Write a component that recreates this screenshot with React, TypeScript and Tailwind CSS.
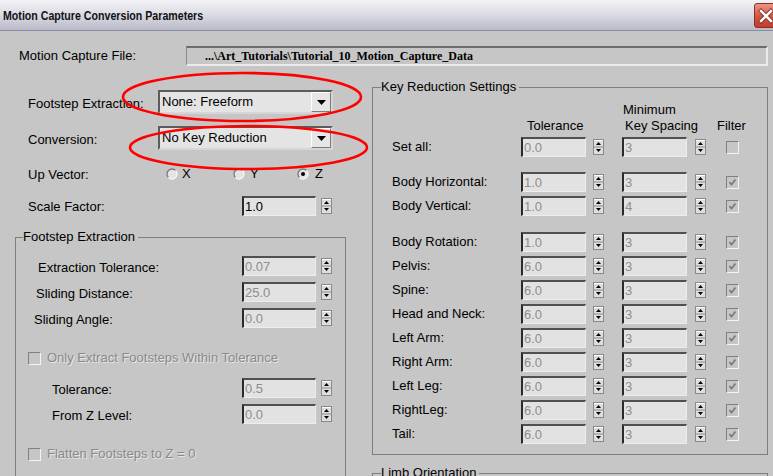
import React from 'react';

const Spinner = () => (
  <svg width="11" height="16" viewBox="0 0 11 16" className="shrink-0 block">
    <rect x="0.5" y="0.5" width="10" height="15" fill="#dedede" stroke="#8a8a8a" />
    <line x1="1" y1="1.5" x2="10" y2="1.5" stroke="#ffffff" />
    <line x1="1" y1="8" x2="10" y2="8" stroke="#8a8a8a" />
    <path d="M5.5 3 L8 6 L3 6 Z" fill="#000" />
    <path d="M3 10 L8 10 L5.5 13 Z" fill="#000" />
  </svg>
);

const Field = ({ value, w = 'w-[74px]', dim = true }: { value: string; w?: string; dim?: boolean }) => (
  <div
    className={`${w} h-[20px] shrink-0 bg-[#e2e2e2] border-t-2 border-l-2 border-t-[#505050] border-l-[#2a2a2a] border-r border-b border-r-[#ededed] border-b-[#ededed] flex items-center pl-[1px] ${
      dim ? 'text-[#8e8e8e]' : 'text-black'
    }`}
  >
    {value}
  </div>
);

const CheckBox = ({ checked }: { checked: boolean }) => (
  <div className="w-[13px] h-[13px] shrink-0 border-t border-l border-t-[#808080] border-l-[#808080] border-b border-r border-b-[#f4f4f4] border-r-[#f4f4f4] bg-[#c6c6c6] flex items-center justify-center">
    {checked && (
      <svg width="9" height="9" viewBox="0 0 9 9">
        <path d="M1.5 4 L3.5 6.5 L7.5 1.5" stroke="#7c7c7c" strokeWidth="1.8" fill="none" />
      </svg>
    )}
  </div>
);

const Radio = ({ checked }: { checked?: boolean }) => (
  <svg width="12" height="12" viewBox="0 0 12 12" className="shrink-0 block">
    <circle cx="6" cy="6" r="5" fill="#e4e4e4" />
    <path d="M2.46 9.54 A5 5 0 0 1 9.54 2.46" stroke="#7a7a7a" strokeWidth="1.3" fill="none" />
    <path d="M9.54 2.46 A5 5 0 0 1 2.46 9.54" stroke="#f6f6f6" strokeWidth="1.3" fill="none" />
    {checked && <circle cx="6" cy="6" r="2" fill="#000" />}
  </svg>
);

const Dropdown = ({ value }: { value: string }) => (
  <div className="w-[175px] h-[24px] bg-[#e4e4e4] border-t-2 border-l-2 border-t-[#5c5c5c] border-l-[#5c5c5c] border-r-2 border-b-2 border-r-[#d6d6d6] border-b-[#d6d6d6] flex items-center justify-between pl-[2px]">
    <span>{value}</span>
    <div className="w-[20px] h-[20px] bg-[#e6e6e6] border-t border-l border-t-[#ffffff] border-l-[#ffffff] border-r border-b border-r-[#7c7c7c] border-b-[#7c7c7c] flex items-center justify-center">
      <svg width="9" height="5" viewBox="0 0 9 5">
        <path d="M0 0 H9 L4.5 5 Z" fill="#000" />
      </svg>
    </div>
  </div>
);

const GroupRow = ({ label, pad, value }: { label: string; pad: string; value: string }) => (
  <div className="flex items-center h-[20px]">
    <span className={`w-[226px] ${pad} pt-[3px]`}>{label}</span>
    <Field value={value} />
    <div className="ml-[5px]">
      <Spinner />
    </div>
  </div>
);

const DisabledCheck = ({ label }: { label: string }) => (
  <div className="flex items-center h-[20px] pl-[12px]">
    <CheckBox checked={false} />
    <span className="ml-[6px] text-[#8a8a8a] [text-shadow:1px_1px_0_#e6e6e6]">{label}</span>
  </div>
);

const KeyRow = ({ label, tol, spacing, checked = true }: { label: string; tol: string; spacing: string; checked?: boolean }) => (
  <div className="flex items-center h-[20px]">
    <span className="w-[148px] pl-[19px]">{label}</span>
    <Field value={tol} w="w-[65px]" />
    <div className="ml-[7px]">
      <Spinner />
    </div>
    <div className="ml-[18px]">
      <Field value={spacing} w="w-[65px]" />
    </div>
    <div className="ml-[8px]">
      <Spinner />
    </div>
    <div className="ml-[20px]">
      <CheckBox checked={checked} />
    </div>
  </div>
);

const limbs = [
  { label: 'Body Rotation:', tol: '1.0' },
  { label: 'Pelvis:', tol: '6.0' },
  { label: 'Spine:', tol: '6.0' },
  { label: 'Head and Neck:', tol: '6.0' },
  { label: 'Left Arm:', tol: '6.0' },
  { label: 'Right Arm:', tol: '6.0' },
  { label: 'Left Leg:', tol: '6.0' },
  { label: 'RightLeg:', tol: '6.0' },
  { label: 'Tail:', tol: '6.0' },
];

export default function App() {
  return (
    <div className="relative w-[773px] h-[476px] overflow-hidden bg-[#c6c6c6] font-['Liberation_Sans',Arial,sans-serif] text-[13px] leading-[16px] text-black">
      {/* title bar */}
      <div className="h-[31px] flex justify-between bg-gradient-to-b from-[#f3f3f7] via-[#dadae3] to-[#babac9] border-b border-[#8c8ca2]">
        <span className="ml-[3px] mt-[8px] self-start inline-block origin-left scale-x-[0.85] font-bold text-[12.5px] whitespace-nowrap text-[#111]">
          Motion Capture Conversion Parameters
        </span>
        <div className="mt-[3px] mr-[-5px] w-[24px] h-[25px] rounded-[3px] bg-gradient-to-b from-[#ec9585] via-[#d65644] to-[#c23c2a] border border-[#8a3024] flex items-center justify-center">
          <svg width="16" height="16" viewBox="0 0 16 16">
            <path d="M3 3 L13 13 M13 3 L3 13" stroke="#7a2a20" strokeWidth="4.2" strokeLinecap="square" />
            <path d="M3 3 L13 13 M13 3 L3 13" stroke="#ffffff" strokeWidth="2.6" strokeLinecap="square" />
          </svg>
        </div>
      </div>

      {/* file row */}
      <div className="flex items-center h-[20px] mt-[15px]">
        <span className="w-[186px] pl-[19px]">Motion Capture File:</span>
        <div className="w-[582px] h-[20px] border-t-2 border-t-[#6c6c6c] border-l border-l-[#8c8c8c] border-r-2 border-r-[#ebebeb] border-b-2 border-b-[#ebebeb] flex items-center pl-[18px] font-['Liberation_Serif',serif] font-bold text-[12px]">
          {'...\\Art_Tutorials\\Tutorial_10_Motion_Capture_Data'}
        </div>
      </div>

      <div className="flex">
        {/* left column */}
        <div className="ml-[15px] w-[331px] pt-[24px]">
          <div className="flex items-center h-[24px]">
            <span className="w-[143px] pl-[13px] pt-[3px]">Footstep Extraction:</span>
            <Dropdown value="None: Freeform" />
          </div>
          <div className="flex items-center h-[24px] mt-[12px]">
            <span className="w-[143px] pl-[13px] pt-[3px]">Conversion:</span>
            <Dropdown value="No Key Reduction" />
          </div>
          <div className="flex items-center h-[20px] mt-[14px]">
            <span className="w-[151px] pl-[13px] pt-[1px]">Up Vector:</span>
            <div className="w-[67px] flex items-center">
              <Radio />
              <span className="ml-[4px]">X</span>
            </div>
            <div className="w-[64px] flex items-center">
              <Radio />
              <span className="ml-[5px]">Y</span>
            </div>
            <div className="flex items-center">
              <Radio checked />
              <span className="ml-[6px]">Z</span>
            </div>
          </div>
          <div className="flex items-center h-[20px] mt-[12px]">
            <span className="w-[227px] pl-[13px] pt-[2px]">Scale Factor:</span>
            <Field value="1.0" dim={false} />
            <div className="ml-[5px]">
              <Spinner />
            </div>
          </div>

          <fieldset className="mt-[13px] w-[331px] h-[270px] border border-[#7e7e7e]">
            <legend className="ml-[7px] pr-[3px] leading-[16px]">Footstep Extraction</legend>
            <div className="mt-[11px] flex flex-col gap-[6px]">
              <GroupRow label="Extraction Tolerance:" pad="pl-[22px]" value="0.07" />
              <GroupRow label="Sliding Distance:" pad="pl-[20px]" value="25.0" />
              <GroupRow label="Sliding Angle:" pad="pl-[18px]" value="0.0" />
            </div>
            <div className="mt-[20px]">
              <DisabledCheck label="Only Extract Footsteps Within Tolerance" />
            </div>
            <div className="mt-[10px] flex flex-col gap-[6px]">
              <GroupRow label="Tolerance:" pad="pl-[36px]" value="0.5" />
              <GroupRow label="From Z Level:" pad="pl-[36px]" value="0.0" />
            </div>
            <div className="mt-[20px]">
              <DisabledCheck label="Flatten Footsteps to Z = 0" />
            </div>
          </fieldset>
        </div>

        {/* right column */}
        <div className="ml-[26px] w-[396px] pt-[13px]">
          <fieldset className="w-[396px] border border-[#7e7e7e] pb-[10px]">
            <legend className="ml-[8px] pr-[3px] leading-[16px]">Key Reduction Settings</legend>
            <div className="mt-[7px] flex items-end">
              <span className="ml-[154px] w-[96px]">Tolerance</span>
              <div className="w-[94px] flex flex-col">
                <span>Minimum</span>
                <span className="pl-[2px]">Key Spacing</span>
              </div>
              <span>Filter</span>
            </div>
            <div className="mt-[3px]">
              <KeyRow label="Set all:" tol="0.0" spacing="3" checked={false} />
            </div>
            <div className="mt-[15px] flex flex-col gap-[4px]">
              <KeyRow label="Body Horizontal:" tol="1.0" spacing="3" />
              <KeyRow label="Body Vertical:" tol="1.0" spacing="4" />
            </div>
            <div className="mt-[16px] flex flex-col gap-[4px]">
              {limbs.map((l) => (
                <KeyRow key={l.label} label={l.label} tol={l.tol} spacing="3" />
              ))}
            </div>
          </fieldset>
          <fieldset className="mt-[10px] w-[396px] h-[60px] border border-[#7e7e7e]">
            <legend className="ml-[8px] pr-[3px] leading-[16px]">Limb Orientation</legend>
          </fieldset>
        </div>
      </div>

      {/* red annotation ellipses */}
      <svg className="absolute left-0 top-0 pointer-events-none" width="773" height="476" viewBox="0 0 773 476">
        <ellipse cx="242" cy="97" rx="119" ry="24" fill="none" stroke="#ff0000" strokeWidth="2.6" />
        <ellipse cx="248.5" cy="147.5" rx="118.5" ry="21.5" fill="none" stroke="#ff0000" strokeWidth="2.6" />
      </svg>
    </div>
  );
}
